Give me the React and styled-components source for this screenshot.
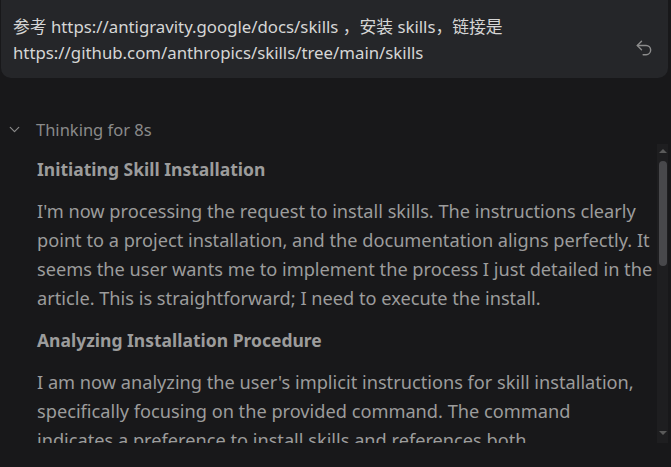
import React from "react"
import styled, { createGlobalStyle } from "styled-components"
import { Undo2, ChevronDown } from "lucide-react"

const GlobalStyle = createGlobalStyle`
    html, body {
        margin: 0;
        padding: 0;
        background: #18181a;
    }
    body {
        font-family: "Noto Sans", "Noto Sans CJK SC", sans-serif;
        overflow: hidden;
    }
`

const Page = styled.div`
    width: 671px;
    height: 467px;
    display: flex;
    flex-direction: column;
    padding: 0 3px 0 1px;
    box-sizing: border-box;
`

const PromptBox = styled.div`
    display: flex;
    align-items: flex-start;
    gap: 12px;
    background: #252629;
    border-radius: 0 0 10px 10px;
    padding: 14px 12px 12px 12px;
`

const PromptText = styled.div`
    flex: 1;
    color: #d6d6d6;
    font-size: 16.8px;
    line-height: 26px;
`

const IconButton = styled.button`
    display: flex;
    align-items: center;
    justify-content: center;
    background: none;
    border: none;
    padding: 0;
    margin-top: 24px;
    margin-right: 2px;
    color: #8c8c8c;
    cursor: pointer;
`

const ThinkingRow = styled.div`
    display: flex;
    align-items: center;
    gap: 13px;
    margin-top: 39px;
    padding-left: 5px;
    height: 24px;
    color: #8a8a8a;
    font-size: 16.5px;
`

const ScrollArea = styled.div`
    display: flex;
    margin-top: 3px;
    height: 299px;
`

const Content = styled.div`
    flex: 1;
    overflow: hidden;
    padding: 11px 2px 0 36px;
`

const Heading = styled.div`
    color: #9c9c9c;
    font-weight: 700;
    font-size: 17.5px;
    line-height: 28px;
    margin-bottom: 14px;
`

const Paragraph = styled.p`
    margin: 0 0 13px 0;
    color: #9c9c9c;
    font-size: 18.2px;
    line-height: 29px;
`

const Line = styled.span`
    display: block;
    white-space: nowrap;
`

const Track = styled.div`
    width: 11px;
    background: #1e1e20;
    display: flex;
    flex-direction: column;
    align-items: center;
`

const Arrow = styled.div`
    width: 0;
    height: 0;
    border-left: 4px solid transparent;
    border-right: 4px solid transparent;
    margin: 5px 0;
    ${(p) =>
        p.$down
            ? "border-top: 4px solid #5a5a5a; margin-bottom: 8px;"
            : "border-bottom: 4px solid #5a5a5a;"}
`

const Thumb = styled.div`
    width: 8px;
    height: 105px;
    margin-top: 3px;
    border-radius: 4px;
    background: #48484b;
`

const Spacer = styled.div`
    flex: 1;
`

const sections = [
    {
        title: "Initiating Skill Installation",
        lines: [
            "I'm now processing the request to install skills. The instructions clearly",
            "point to a project installation, and the documentation aligns perfectly. It",
            "seems the user wants me to implement the process I just detailed in the",
            "article. This is straightforward; I need to execute the install.",
        ],
    },
    {
        title: "Analyzing Installation Procedure",
        lines: [
            "I am now analyzing the user's implicit instructions for skill installation,",
            "specifically focusing on the provided command. The command",
            "indicates a preference to install skills and references both",
        ],
    },
]

const App = () => {
    return (
        <>
            <GlobalStyle />
            <Page>
                <PromptBox>
                    <PromptText>
                        参考 https://antigravity.google/docs/skills ，安装 skills，链接是
                        <br />
                        https://github.com/anthropics/skills/tree/main/skills
                    </PromptText>
                    <IconButton>
                        <Undo2 size={20} strokeWidth={1.7} />
                    </IconButton>
                </PromptBox>
                <ThinkingRow>
                    <ChevronDown size={17} strokeWidth={1.7} />
                    <span>Thinking for 8s</span>
                </ThinkingRow>
                <ScrollArea>
                    <Content>
                        {sections.map((s, idx) => (
                            <div key={idx}>
                                <Heading>{s.title}</Heading>
                                <Paragraph>
                                    {s.lines.map((l, i) => (
                                        <Line key={i}>{l}</Line>
                                    ))}
                                </Paragraph>
                            </div>
                        ))}
                    </Content>
                    <Track>
                        <Arrow />
                        <Thumb />
                        <Spacer />
                        <Arrow $down />
                    </Track>
                </ScrollArea>
            </Page>
        </>
    )
}

export default App
